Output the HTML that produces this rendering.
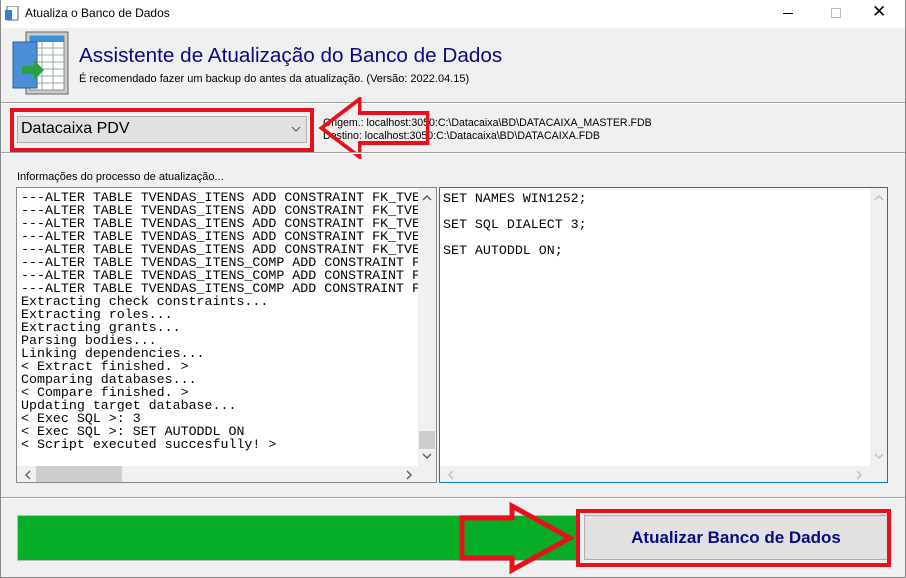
<!DOCTYPE html>
<html><head><meta charset="utf-8"><style>
*{margin:0;padding:0;box-sizing:border-box}
body{width:906px;height:578px;overflow:hidden;background:#f0f0f0;font-family:"Liberation Sans",sans-serif;position:relative}
.a{position:absolute}
.mono{font-family:"Liberation Mono",monospace;font-size:13.3px;line-height:13px;white-space:pre;color:#000}
</style></head><body>
<div class="a" style="left:0;top:0;width:906px;height:28px;background:#fff"></div>
<div class="a" style="left:0;top:0;width:1px;height:578px;background:#888"></div>
<div class="a" style="left:905px;top:0;width:1px;height:578px;background:#888"></div>
<div class="a" style="left:0;top:577px;width:906px;height:1px;background:#888"></div>
<svg class="a" style="left:5px;top:6px" width="14" height="16"><rect x="2" y="0" width="11" height="14" fill="#fff" stroke="#567"/><rect x="0" y="4" width="7" height="10" fill="#3a7fd0"/></svg>
<div class="a" style="left:25px;top:6px;font-size:12px;color:#000">Atualiza o Banco de Dados</div>
<div class="a" style="left:783px;top:13px;width:10px;height:1px;background:#000"></div>
<div class="a" style="left:831px;top:8px;width:10px;height:10px;border:1px solid #bbb"></div>
<div class="a" style="left:872px;top:2px;font-size:17px;color:#000">✕</div>
<svg class="a" style="left:10px;top:30px" width="62" height="70">
<rect x="16" y="2" width="42" height="62" fill="#c8ccd0" stroke="#666"/>
<rect x="20" y="6" width="34" height="54" fill="#fff" stroke="#888"/>
<rect x="20" y="6" width="34" height="6" fill="#3a8fd8"/>
<g stroke="#9aa" stroke-width="1"><line x1="20" y1="18" x2="54" y2="18"/><line x1="20" y1="25" x2="54" y2="25"/><line x1="20" y1="32" x2="54" y2="32"/><line x1="20" y1="39" x2="54" y2="39"/><line x1="20" y1="46" x2="54" y2="46"/><line x1="20" y1="53" x2="54" y2="53"/><line x1="32" y1="12" x2="32" y2="60"/><line x1="43" y1="12" x2="43" y2="60"/></g>
<rect x="3" y="12" width="24" height="46" fill="#4a8fd8" stroke="#2a5f9a"/>
<path d="M12 36h12v-6l10 10-10 10v-6H12z" fill="#2aa040"/>
</svg>
<div class="a" style="left:79px;top:44px;font-size:20.7px;color:#0a0a80">Assistente de Atualização do Banco de Dados</div>
<div class="a" style="left:79px;top:73px;font-size:11px;color:#000">É recomendado fazer um backup do antes da atualização. (Versão: 2022.04.15)</div>
<div class="a" style="left:1px;top:102px;width:904px;height:1px;background:#a0a0a0"></div>
<div class="a" style="left:1px;top:103px;width:904px;height:1px;background:#fff"></div>
<div class="a" style="left:17px;top:116px;width:290px;height:27px;background:#e1e1e1;border:1px solid #adadad"></div>
<div class="a" style="left:21px;top:120px;font-size:16px;color:#000">Datacaixa PDV</div>
<svg class="a" style="left:291px;top:126px" width="10" height="6"><path d="M1 1l4 4 4-4" fill="none" stroke="#555"/></svg>
<div class="a" style="left:10px;top:108px;width:304px;height:44px;border:4px solid #e8111b"></div>
<div class="a" style="left:323px;top:117px;font-size:10.6px;line-height:13px;color:#000">Origem.: localhost:3050:C:\Datacaixa\BD\DATACAIXA_MASTER.FDB<br>Destino: localhost:3050:C:\Datacaixa\BD\DATACAIXA.FDB</div>
<svg class="a" style="left:318px;top:97px" width="114" height="62"><path d="M4 31L48 2v14h78v30H48v14z" transform="scale(0.87,1)" fill="none" stroke="#e8111b" stroke-width="4"/></svg>
<div class="a" style="left:1px;top:152px;width:904px;height:1px;background:#a0a0a0"></div>
<div class="a" style="left:1px;top:153px;width:904px;height:1px;background:#fff"></div>
<div class="a" style="left:17px;top:171px;font-size:11px;color:#000">Informações do processo de atualização...</div>
<div class="a" style="left:16px;top:187px;width:421px;height:296px;background:#fff;border:1px solid #828790;overflow:hidden">
<div class="mono a" style="left:4px;top:3px">---ALTER TABLE TVENDAS_ITENS ADD CONSTRAINT FK_TVE
---ALTER TABLE TVENDAS_ITENS ADD CONSTRAINT FK_TVE
---ALTER TABLE TVENDAS_ITENS ADD CONSTRAINT FK_TVE
---ALTER TABLE TVENDAS_ITENS ADD CONSTRAINT FK_TVE
---ALTER TABLE TVENDAS_ITENS ADD CONSTRAINT FK_TVE
---ALTER TABLE TVENDAS_ITENS_COMP ADD CONSTRAINT F
---ALTER TABLE TVENDAS_ITENS_COMP ADD CONSTRAINT F
---ALTER TABLE TVENDAS_ITENS_COMP ADD CONSTRAINT F
Extracting check constraints...
Extracting roles...
Extracting grants...
Parsing bodies...
Linking dependencies...
&lt; Extract finished. &gt;
Comparing databases...
&lt; Compare finished. &gt;
Updating target database...
&lt; Exec SQL &gt;: 3
&lt; Exec SQL &gt;: SET AUTODDL ON
&lt; Script executed succesfully! &gt;</div>
<div class="a" style="left:401px;top:0;width:18px;height:278px;background:#f0f0f0"></div>
<div class="a" style="left:402px;top:243px;width:16px;height:18px;background:#cdcdcd"></div>
<svg class="a" style="left:405px;top:7px" width="10" height="6"><path d="M1 5l4-4 4 4" fill="none" stroke="#606060" stroke-width="1.5"/></svg>
<svg class="a" style="left:405px;top:265px" width="10" height="6"><path d="M1 1l4 4 4-4" fill="none" stroke="#606060" stroke-width="1.5"/></svg>
<div class="a" style="left:0;top:278px;width:419px;height:17px;background:#f0f0f0"></div>
<div class="a" style="left:19px;top:278px;width:86px;height:16px;background:#cdcdcd"></div>
<svg class="a" style="left:8px;top:282px" width="6" height="10"><path d="M5 1L1 5l4 4" fill="none" stroke="#606060" stroke-width="1.5"/></svg>
<svg class="a" style="left:389px;top:282px" width="6" height="10"><path d="M1 1l4 4-4 4" fill="none" stroke="#606060" stroke-width="1.5"/></svg>
</div>
<div class="a" style="left:439px;top:187px;width:449px;height:296px;background:#fff;border:1px solid #0078d7;overflow:hidden">
<div class="mono a" style="left:3px;top:4px;line-height:13px">SET NAMES WIN1252;

SET SQL DIALECT 3;

SET AUTODDL ON;</div>
<div class="a" style="left:430px;top:0;width:17px;height:278px;background:#f0f0f0"></div>
<div class="a" style="left:0;top:278px;width:447px;height:17px;background:#f0f0f0"></div>
<svg class="a" style="left:434px;top:7px" width="10" height="6"><path d="M1 5l4-4 4 4" fill="none" stroke="#c0c0c0" stroke-width="1.5"/></svg>
<svg class="a" style="left:434px;top:265px" width="10" height="6"><path d="M1 1l4 4 4-4" fill="none" stroke="#c0c0c0" stroke-width="1.5"/></svg>
<svg class="a" style="left:8px;top:282px" width="6" height="10"><path d="M5 1L1 5l4 4" fill="none" stroke="#c0c0c0" stroke-width="1.5"/></svg>
<svg class="a" style="left:416px;top:282px" width="6" height="10"><path d="M1 1l4 4-4 4" fill="none" stroke="#c0c0c0" stroke-width="1.5"/></svg>
</div>
<div class="a" style="left:1px;top:497px;width:904px;height:1px;background:#a0a0a0"></div>
<div class="a" style="left:1px;top:498px;width:904px;height:1px;background:#fff"></div>
<div class="a" style="left:17px;top:515px;width:561px;height:46px;background:#06ae27;border:1px solid #bcbcbc"></div>
<svg class="a" style="left:455px;top:502px" width="125" height="72"><path d="M7 16h50V4l58 32-58 32V56H7z" fill="none" stroke="#e8111b" stroke-width="5"/></svg>
<div class="a" style="left:584px;top:515px;width:304px;height:45px;background:#e1e1e1;border:1px solid #adadad"></div>
<div class="a" style="left:584px;top:528px;width:304px;text-align:center;font-size:17px;font-weight:bold;color:#0a0a80">Atualizar Banco de Dados</div>
<div class="a" style="left:576px;top:509px;width:315px;height:58px;border:4px solid #e8111b"></div>
</body></html>
